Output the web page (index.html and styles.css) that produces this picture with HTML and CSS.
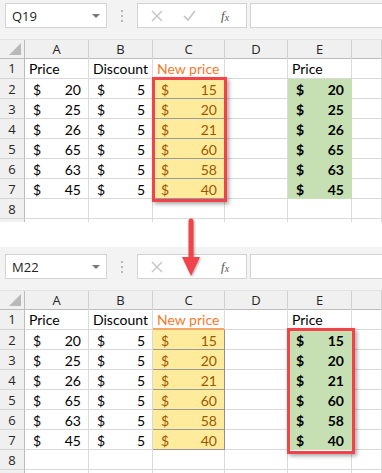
FILE: index.html
```html
<!DOCTYPE html>
<html lang="en">
<head>
    <meta charset="UTF-8" />
    <title>Excel - paste values</title>
    <link rel="stylesheet" href="styles.css">
</head>
<body>

<div class="sheet sheet-top">
    <div class="toolbar">
        <div class="namebox"><span>Q19</span><span class="caret"></span></div>
        <div class="grip"><i></i><i></i><i></i></div>
        <div class="fxbox">
            <svg class="ico" width="12" height="12" viewBox="0 0 12 12"><path d="M1 1 L11 11 M11 1 L1 11" stroke="#c4c4c4" stroke-width="1.4" fill="none"/></svg>
            <svg class="ico" width="13" height="11" viewBox="0 0 13 11"><path d="M1 6 L5 10 L12 1" stroke="#c4c4c4" stroke-width="1.6" fill="none"/></svg>
            <span class="fx">f<sub>x</sub></span>
        </div>
        <div class="input"></div>
    </div>

    <div class="row head">
        <div class="rh corner"><span class="tri"></span></div>
        <div class="ch">A</div><div class="ch">B</div><div class="ch">C</div><div class="ch">D</div><div class="ch">E</div><div class="ch"></div>
    </div>
    <div class="row r1">
        <div class="rh">1</div>
        <div class="c">Price</div><div class="c">Discount</div><div class="c new">New price</div><div class="c"></div><div class="c">Price</div><div class="c"></div>
    </div>
    <div class="row"><div class="rh">2</div><div class="c acc"><span>$</span><span>20</span></div><div class="c acc"><span>$</span><span>5</span></div><div class="c acc calc"><span>$</span><span>15</span></div><div class="c"></div><div class="c acc val"><span>$</span><span>20</span></div><div class="c"></div></div>
    <div class="row"><div class="rh">3</div><div class="c acc"><span>$</span><span>25</span></div><div class="c acc"><span>$</span><span>5</span></div><div class="c acc calc"><span>$</span><span>20</span></div><div class="c"></div><div class="c acc val"><span>$</span><span>25</span></div><div class="c"></div></div>
    <div class="row"><div class="rh">4</div><div class="c acc"><span>$</span><span>26</span></div><div class="c acc"><span>$</span><span>5</span></div><div class="c acc calc"><span>$</span><span>21</span></div><div class="c"></div><div class="c acc val"><span>$</span><span>26</span></div><div class="c"></div></div>
    <div class="row"><div class="rh">5</div><div class="c acc"><span>$</span><span>65</span></div><div class="c acc"><span>$</span><span>5</span></div><div class="c acc calc"><span>$</span><span>60</span></div><div class="c"></div><div class="c acc val"><span>$</span><span>65</span></div><div class="c"></div></div>
    <div class="row"><div class="rh">6</div><div class="c acc"><span>$</span><span>63</span></div><div class="c acc"><span>$</span><span>5</span></div><div class="c acc calc"><span>$</span><span>58</span></div><div class="c"></div><div class="c acc val"><span>$</span><span>63</span></div><div class="c"></div></div>
    <div class="row"><div class="rh">7</div><div class="c acc"><span>$</span><span>45</span></div><div class="c acc"><span>$</span><span>5</span></div><div class="c acc calc"><span>$</span><span>40</span></div><div class="c"></div><div class="c acc val"><span>$</span><span>45</span></div><div class="c"></div></div>
    <div class="row"><div class="rh">8</div><div class="c"></div><div class="c"></div><div class="c"></div><div class="c"></div><div class="c"></div><div class="c"></div></div>
    <div class="row"><div class="rh"></div><div class="c"></div><div class="c"></div><div class="c"></div><div class="c"></div><div class="c"></div><div class="c"></div></div>

    <div class="mark mark-c"></div>
</div>

<div class="sheet sheet-bottom">
    <div class="toolbar">
        <div class="namebox"><span>M22</span><span class="caret"></span></div>
        <div class="grip"><i></i><i></i><i></i></div>
        <div class="fxbox">
            <svg class="ico" width="12" height="12" viewBox="0 0 12 12"><path d="M1 1 L11 11 M11 1 L1 11" stroke="#c4c4c4" stroke-width="1.4" fill="none"/></svg>
            <svg class="ico hidden" width="13" height="11" viewBox="0 0 13 11"><path d="M1 6 L5 10 L12 1" stroke="#c4c4c4" stroke-width="1.6" fill="none"/></svg>
            <span class="fx">f<sub>x</sub></span>
        </div>
        <div class="input"></div>
    </div>

    <div class="row head">
        <div class="rh corner"><span class="tri"></span></div>
        <div class="ch">A</div><div class="ch">B</div><div class="ch">C</div><div class="ch">D</div><div class="ch">E</div><div class="ch"></div>
    </div>
    <div class="row r1">
        <div class="rh">1</div>
        <div class="c">Price</div><div class="c">Discount</div><div class="c new">New price</div><div class="c"></div><div class="c">Price</div><div class="c"></div>
    </div>
    <div class="row"><div class="rh">2</div><div class="c acc"><span>$</span><span>20</span></div><div class="c acc"><span>$</span><span>5</span></div><div class="c acc calc"><span>$</span><span>15</span></div><div class="c"></div><div class="c acc val"><span>$</span><span>15</span></div><div class="c"></div></div>
    <div class="row"><div class="rh">3</div><div class="c acc"><span>$</span><span>25</span></div><div class="c acc"><span>$</span><span>5</span></div><div class="c acc calc"><span>$</span><span>20</span></div><div class="c"></div><div class="c acc val"><span>$</span><span>20</span></div><div class="c"></div></div>
    <div class="row"><div class="rh">4</div><div class="c acc"><span>$</span><span>26</span></div><div class="c acc"><span>$</span><span>5</span></div><div class="c acc calc"><span>$</span><span>21</span></div><div class="c"></div><div class="c acc val"><span>$</span><span>21</span></div><div class="c"></div></div>
    <div class="row"><div class="rh">5</div><div class="c acc"><span>$</span><span>65</span></div><div class="c acc"><span>$</span><span>5</span></div><div class="c acc calc"><span>$</span><span>60</span></div><div class="c"></div><div class="c acc val"><span>$</span><span>60</span></div><div class="c"></div></div>
    <div class="row"><div class="rh">6</div><div class="c acc"><span>$</span><span>63</span></div><div class="c acc"><span>$</span><span>5</span></div><div class="c acc calc"><span>$</span><span>58</span></div><div class="c"></div><div class="c acc val"><span>$</span><span>58</span></div><div class="c"></div></div>
    <div class="row"><div class="rh">7</div><div class="c acc"><span>$</span><span>45</span></div><div class="c acc"><span>$</span><span>5</span></div><div class="c acc calc"><span>$</span><span>40</span></div><div class="c"></div><div class="c acc val"><span>$</span><span>40</span></div><div class="c"></div></div>
    <div class="row"><div class="rh">8</div><div class="c"></div><div class="c"></div><div class="c"></div><div class="c"></div><div class="c"></div><div class="c"></div></div>
    <div class="row"><div class="rh"></div><div class="c"></div><div class="c"></div><div class="c"></div><div class="c"></div><div class="c"></div><div class="c"></div></div>

    <div class="mark mark-e"></div>
</div>

<!-- flecha entre las dos capturas -->
<svg class="arrow" width="24" height="62" viewBox="0 0 24 62">
    <path d="M12 4 L12 42" stroke="#f2434a" stroke-width="5" stroke-linecap="round"/>
    <path d="M3 40 L21 40 L12 59 Z" fill="#f2434a"/>
</svg>

</body>
</html>
```

FILE: styles.css
```css
body {
    margin: 0;
    width: 382px;
    height: 473px;
    overflow: hidden;
    position: relative;
    background: #fff;
    font-family: 'Lato', 'Liberation Sans', sans-serif;
    color: #000;
}

.sheet {
    position: relative;
    overflow: hidden;
}

.sheet-top {
    height: 222px;
}

.sheet-bottom {
    margin-top: 25px;
    height: 226px;
}

/* barra de fórmulas */
.toolbar {
    display: flex;
    align-items: flex-start;
    background: #f3f3f3;
    padding: 3px 0 0 5px;
    height: 39px;
    box-sizing: border-box;
}

.sheet-bottom .toolbar {
    padding-top: 7px;
    height: 43px;
}

.namebox {
    width: 102px;
    height: 25px;
    box-sizing: border-box;
    background: #fff;
    border: 1px solid #d4d4d4;
    display: flex;
    align-items: center;
    justify-content: space-between;
    padding: 0 6px 0 6px;
    font-family: 'Open Sans', 'Liberation Sans', sans-serif;
    font-size: 13px;
    color: #222;
}

.caret {
    width: 0;
    height: 0;
    border-left: 4px solid transparent;
    border-right: 4px solid transparent;
    border-top: 4px solid #777;
}

.grip {
    width: 30px;
    height: 25px;
    display: flex;
    flex-direction: column;
    align-items: center;
    justify-content: center;
    gap: 3px;
}

.grip i {
    width: 2px;
    height: 2px;
    background: #b8b8b8;
}

.fxbox {
    width: 110px;
    height: 25px;
    box-sizing: border-box;
    background: #fff;
    border: 1px solid #d4d4d4;
    display: flex;
    align-items: center;
    padding: 0 0 0 13px;
}

.fxbox .ico {
    margin-right: 20px;
}

.fxbox .ico + .ico {
    margin-right: 0;
}

.fxbox .hidden {
    visibility: hidden;
}

.fx {
    margin-left: 25px;
    font-family: 'Liberation Serif', serif;
    font-style: italic;
    font-size: 13px;
    color: #555;
}

.fx sub {
    font-size: 10px;
    vertical-align: -1px;
}

.input {
    flex: 1;
    margin-left: 3px;
    height: 25px;
    box-sizing: border-box;
    background: #fff;
    border: 1px solid #d4d4d4;
    border-right: none;
}

/* cuadrícula */
.row {
    display: grid;
    grid-template-columns: 25px 64px 64px 72px 63px 64px 1fr;
    height: 20px;
}

.row.head {
    height: 19px;
    background: #f0f0f0;
    border-top: 1px solid #e2e2e2;
    box-sizing: border-box;
}

.row.r1 {
    height: 21px;
}

.rh {
    background: #f0f0f0;
    border-right: 1px solid #bdbdbd;
    border-bottom: 1px solid #d6d6d6;
    box-sizing: border-box;
    display: flex;
    align-items: center;
    justify-content: center;
    font-family: 'Open Sans', 'Liberation Sans', sans-serif;
    font-size: 13px;
    color: #262626;
}

.rh.corner {
    position: relative;
    border-bottom: 1px solid #bdbdbd;
}

.tri {
    position: absolute;
    right: 3px;
    bottom: 3px;
    width: 0;
    height: 0;
    border-left: 12px solid transparent;
    border-bottom: 12px solid #b9b9b9;
}

.ch {
    border-right: 1px solid #d0d0d0;
    border-bottom: 1px solid #bdbdbd;
    box-sizing: border-box;
    display: flex;
    align-items: center;
    justify-content: center;
    font-family: 'Open Sans', 'Liberation Sans', sans-serif;
    font-size: 13px;
    color: #262626;
}

.c {
    border-right: 1px solid #dadada;
    border-bottom: 1px solid #dadada;
    box-sizing: border-box;
    display: flex;
    align-items: center;
    padding: 1px 4px 0 4px;
    font-size: 14px;
    white-space: nowrap;
    overflow: visible;
}

.c.acc {
    justify-content: space-between;
    padding: 1px 7px 0 8px;
}

.c.new {
    color: #f47a2c;
    border-bottom: 2px solid #f4a56a;
}

.c.calc {
    background: #ffeb9c;
    color: #9c5700;
    border-right: 1px solid #8f8f8f;
    border-bottom: 1px solid #9a9a9a;
}

.c.val {
    background: #c6e0b4;
    border-color: #c6e0b4;
    font-weight: bold;
}

/* recuadros rojos */
.mark {
    position: absolute;
    border: 3px solid #f2434a;
    box-shadow: 2px 2px 4px rgba(0, 0, 0, 0.35);
}

.mark-c {
    left: 152px;
    top: 77px;
    width: 69px;
    height: 119px;
}

.mark-e {
    left: 287px;
    top: 81px;
    width: 62px;
    height: 120px;
}

.arrow {
    position: absolute;
    left: 179px;
    top: 217px;
    filter: drop-shadow(1px 1px 1px rgba(0, 0, 0, 0.3));
}
```
